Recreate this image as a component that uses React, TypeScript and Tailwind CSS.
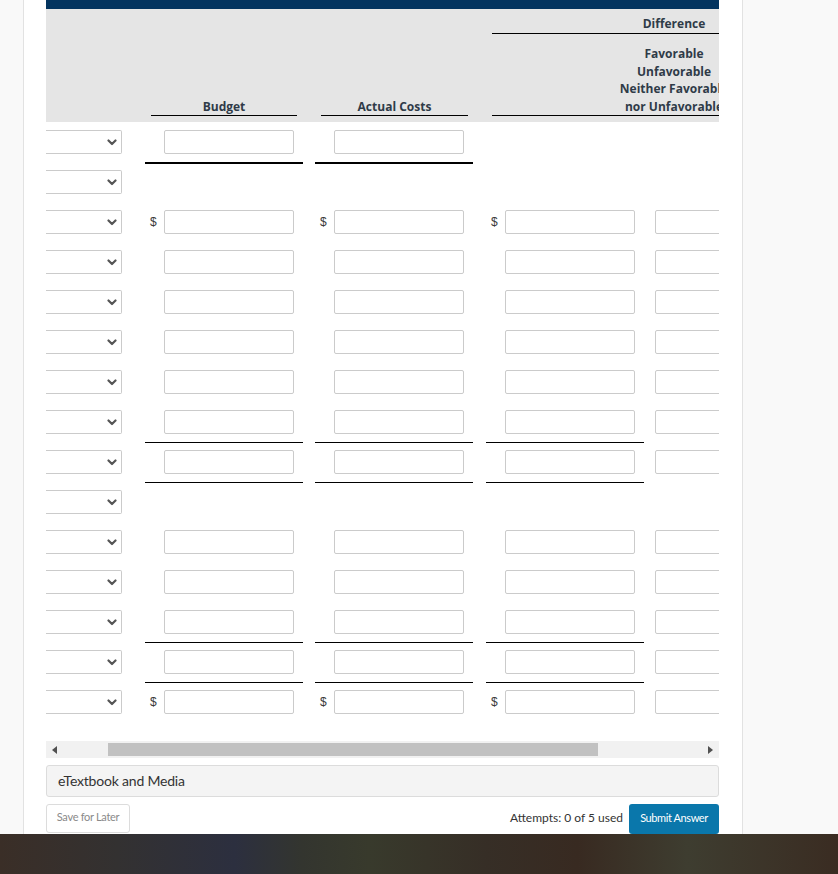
import React from 'react';

type Line = 'none' | 'thin' | 'thick';

interface RowSpec {
  id: number;
  select: boolean;
  budget: boolean;
  actual: boolean;
  diff: boolean;
  fourth: boolean;
  dollar: boolean;
  line: Line;
}

const full = (id: number, line: Line = 'none', dollar = false): RowSpec => ({
  id,
  select: true,
  budget: true,
  actual: true,
  diff: true,
  fourth: true,
  dollar,
  line,
});

const ROWS: RowSpec[] = [
  { id: 1, select: true, budget: true, actual: true, diff: false, fourth: false, dollar: false, line: 'thick' },
  { id: 2, select: true, budget: false, actual: false, diff: false, fourth: false, dollar: false, line: 'none' },
  full(3, 'none', true),
  full(4),
  full(5),
  full(6),
  full(7),
  full(8, 'thin'),
  full(9, 'thin'),
  { id: 10, select: true, budget: false, actual: false, diff: false, fourth: false, dollar: false, line: 'none' },
  full(11),
  full(12),
  full(13, 'thin'),
  full(14, 'thin'),
  full(15, 'thick', true),
];

const headFont = { fontFamily: '"Open Sans", "DejaVu Sans", sans-serif' };
const bodyFont = { fontFamily: 'Lato, "Open Sans", sans-serif' };

const Chevron = () => (
  <svg width="10" height="7" viewBox="0 0 10 7" className="shrink-0">
    <polyline points="1.5,1.5 5,5 8.5,1.5" fill="none" stroke="#555" strokeWidth="2.2" strokeLinecap="round" strokeLinejoin="round" />
  </svg>
);

const SelectBox = () => (
  <div className="w-[76px] h-[24px] shrink-0 border-y border-r border-[#cbcbcb] rounded-r-[2px] bg-white flex items-center justify-end pr-[4px]">
    <Chevron />
  </div>
);

const Field = ({ w = 'w-[130px]' }: { w?: string }) => (
  <div className={`${w} h-[24px] shrink-0 border border-[#cbcbcb] rounded-[2px] bg-white`} />
);

const AmountCell = ({ show, dollar, line }: { show: boolean; dollar: boolean; line: Line }) => {
  const shadow =
    show && line === 'thick'
      ? 'shadow-[0_2px_0_0_#000]'
      : show && line === 'thin'
      ? 'shadow-[0_1px_0_0_#000]'
      : '';
  return (
    <div className={`w-[158px] h-[40px] shrink-0 flex items-start pt-[8px] ${shadow}`}>
      {show && (
        <>
          <span className="w-[19px] h-[24px] flex items-center pl-[5px] text-[12px] text-[#3a3a3a]" style={{ fontFamily: '"Liberation Sans", sans-serif' }}>
            {dollar ? '$' : ''}
          </span>
          <Field />
        </>
      )}
    </div>
  );
};

const Row = ({ row }: { row: RowSpec }) => (
  <div className="flex h-[40px] items-start">
    <div className="pt-[8px]">{row.select && <SelectBox />}</div>
    <div className="ml-[23px]">
      <AmountCell show={row.budget} dollar={row.dollar} line={row.line} />
    </div>
    <div className="ml-[12px]">
      <AmountCell show={row.actual} dollar={row.dollar} line={row.line} />
    </div>
    <div className="ml-[13px]">
      <AmountCell show={row.diff} dollar={row.dollar} line={row.line} />
    </div>
    <div className="ml-[11px] pt-[8px]">{row.fourth && <Field />}</div>
  </div>
);

const Header = () => (
  <div className="h-[113px] bg-[#e5e5e5] flex items-end pb-[6px] text-[12px] font-bold text-[#2f3b48] leading-[17.5px]" style={headFont}>
    <div className="w-[76px] shrink-0" />
    <div className="ml-[29px] w-[146px] shrink-0 text-center border-b border-black">Budget</div>
    <div className="ml-[24px] w-[147px] shrink-0 text-center border-b border-black">Actual Costs</div>
    <div className="ml-[24px] w-[364px] shrink-0 flex flex-col self-stretch pt-[6px]">
      <div className="text-center border-b border-black">Difference</div>
      <div className="mt-auto text-center border-b border-black">
        <div>Favorable</div>
        <div>Unfavorable</div>
        <div className="whitespace-nowrap">Neither Favorable</div>
        <div className="whitespace-nowrap">nor Unfavorable</div>
      </div>
    </div>
  </div>
);

const ScrollBar = () => (
  <div className="mt-[19px] h-[17px] bg-[#f1f1f1] flex items-center relative">
    <svg width="5" height="8" viewBox="0 0 5 8" className="ml-[6px] shrink-0">
      <polygon points="5,0 5,8 0,4" fill="#505050" />
    </svg>
    <div className="ml-[51px] w-[490px] h-[13px] bg-[#c1c1c1]" />
    <svg width="5" height="8" viewBox="0 0 5 8" className="ml-auto mr-[6px] shrink-0">
      <polygon points="0,0 0,8 5,4" fill="#505050" />
    </svg>
  </div>
);

export default function App() {
  return (
    <div className="w-[838px] h-[874px] bg-[#f9f9f9] overflow-hidden flex flex-col">
      <div className="ml-[23px] w-[720px] h-[834px] shrink-0 bg-white border-x border-[#e2e2e2] pl-[22px] pr-[23px] flex flex-col">
        <div className="w-[673px] overflow-hidden">
          <div className="h-[9px] bg-[#03345f]" />
          <Header />
          <div className="flex flex-col">
            {ROWS.map((r) => (
              <Row key={r.id} row={r} />
            ))}
          </div>
        </div>
        <ScrollBar />
        <div className="mt-[7px] h-[32px] bg-[#f4f4f4] border border-[#dcdcdc] rounded-[3px] flex items-center pl-[11px] pb-[1px] text-[14px] text-[#333] tracking-[-0.2px]" style={bodyFont}>
          eTextbook and Media
        </div>
        <div className="mt-[7px] flex items-start justify-between" style={bodyFont}>
          <button className="w-[84px] h-[29px] pb-[2px] border border-[#dcdcdc] rounded-[3px] bg-white text-[11px] text-[#8a8a8a] tracking-[-0.3px]">
            Save for Later
          </button>
          <div className="flex items-center">
            <span className="text-[12px] text-[#333] mr-[6px] pb-[2px]">Attempts: 0 of 5 used</span>
            <button className="w-[90px] h-[30px] pb-[2px] rounded-[3px] bg-[#0a77ab] text-white text-[11px] tracking-[-0.4px]">
              Submit Answer
            </button>
          </div>
        </div>
      </div>
      <div className="h-[40px] shrink-0 bg-[linear-gradient(90deg,#3a2e27_0%,#333131_14%,#2c2f3f_28%,#33352f_36%,#383a2c_44%,#362e26_58%,#382a21_69%,#3e3d30_82%,#3a2c22_100%)]" />
    </div>
  );
}
